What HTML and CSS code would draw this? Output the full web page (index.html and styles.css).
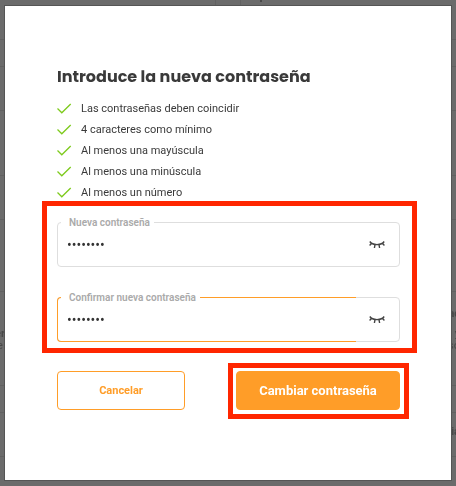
FILE: index.html
```
<!DOCTYPE html>
<html lang="es">
<head>
    <meta charset="utf-8">
    <meta name="viewport" content="width=device-width, initial-scale=1">
    <title>Nueva contraseña</title>
    <link rel="stylesheet" href="styles.css">
</head>
<body>
    <svg width="0" height="0" class="defs">
        <symbol id="check" viewBox="0 0 15 11">
            <path d="M0.5 5.5 L4.8 9.8 L13.7 1" fill="none" stroke="#7dca1c" stroke-width="1.3"/>
        </symbol>
        <symbol id="eye" viewBox="0 0 16 10">
            <path d="M0.8 1.5 C3.5 5.6 12.5 5.6 15.2 1.5 M2.6 3.3 L0.6 5.4 M6 4.6 L5.4 8 M10 4.6 L10.6 8 M13.4 3.3 L15.4 5.4" fill="none" stroke="#444" stroke-width="1.4"/>
        </symbol>
    </svg>

    <div class="backdrop" aria-hidden="true">
        <div class="strip strip-head"><div class="tab"></div><div class="dot"></div></div>
        <div class="strip strip-small"></div>
        <div class="strip strip-label"></div>
        <div class="strip strip-tall"></div>
        <div class="strip strip-label"></div>
        <div class="strip strip-mid"></div>
        <div class="strip strip-text">
            <p class="line"><span></span><b>ac</b></p>
            <p class="line"><b>er</b><span>r y</span></p>
            <p class="line tight"><span>e</span><span>so</span></p>
        </div>
        <div class="strip strip-small"></div>
        <div class="strip strip-label strip-end"><p class="line"><span></span><b>ia</b></p></div>
    </div>

    <form class="modal">
        <h1>Introduce la nueva contraseña</h1>
        <ul class="rules">
            <li><svg class="check"><use href="#check"/></svg>Las contraseñas deben coincidir</li>
            <li><svg class="check"><use href="#check"/></svg>4 caracteres como mínimo</li>
            <li><svg class="check"><use href="#check"/></svg>Al menos una mayúscula</li>
            <li><svg class="check"><use href="#check"/></svg>Al menos una minúscula</li>
            <li><svg class="check"><use href="#check"/></svg>Al menos un número</li>
        </ul>

        <div class="fields mark">
            <div class="field">
                <input type="password" id="pass" value="abcdefgh">
                <label for="pass">Nueva contraseña</label>
                <button type="button" class="eye" aria-label="Mostrar contraseña"><svg><use href="#eye"/></svg></button>
            </div>
            <div class="field active">
                <input type="password" id="pass2" value="abcdefgh">
                <label for="pass2">Confirmar nueva contraseña</label>
                <button type="button" class="eye" aria-label="Mostrar contraseña"><svg><use href="#eye"/></svg></button>
            </div>
        </div>

        <div class="actions">
            <button type="button" class="btn cancel">Cancelar</button>
            <div class="mark submit-mark">
                <button type="submit" class="btn submit">Cambiar contraseña</button>
            </div>
        </div>
    </form>
</body>
</html>
```

FILE: styles.css
```
* {
    box-sizing: border-box;
}

body {
    display: flex;
    min-height: 100vh;
    margin: 0;
    padding: 6px 5px;
    background: #6b6b6b;
    color: #3a3a3a;
    font-family: Roboto, "Liberation Sans", sans-serif;
    font-size: 11px;
}

.defs {
    position: absolute;
}

/* page behind the dialog */
.backdrop {
    position: fixed;
    inset: 0;
    overflow: hidden;
    color: #484848;
}

.strip {
    border-bottom: 1px solid #616161;
}

.strip-head { display: flex; height: 40px; padding-left: 215px; }
.strip-tall { height: 65px; }
.strip-mid { height: 72px; }
.strip-text { height: 94px; padding-top: 15px; }
.strip-small { height: 27px; }
.strip-label { height: 44px; }
.strip-end { padding-top: 12px; }

.tab {
    width: 26px;
    border: solid #616161;
    border-width: 0 1px;
}

.dot {
    width: 2px;
    height: 2px;
    margin-left: 19px;
    background: #484848;
}

.line {
    display: flex;
    justify-content: space-between;
    margin: 0 -4px 6px -5px;
    line-height: 14px;
}

.line.tight {
    margin: -8px -4px 0 -3px;
}

.modal {
    position: relative;
    flex: 1;
    padding: 61px 51px 61px 52px;
    background: #fff;
    box-shadow: 0 0 0 1px #555;
}

h1 {
    margin: 0;
    font-family: Poppins, Inter, sans-serif;
    font-size: 16px;
    font-weight: 700;
    line-height: 20px;
}

.rules {
    margin: 11px 0 0;
    padding: 0;
    list-style: none;
}

.rules li {
    display: flex;
    align-items: center;
    gap: 9px;
    line-height: 21px;
}

.check {
    width: 15px;
    height: 11px;
}

/* red callout frame */
.mark {
    border: 5px solid #ff2600;
}

.fields {
    display: flex;
    flex-direction: column;
    gap: 30px;
    margin: -2px -17px 0 -15px;
    padding: 16px 12px 6px 10px;
}

.field {
    position: relative;
    display: flex;
    height: 45px;
    border: 1px solid #dedede;
    border-radius: 4px;
}

.field input {
    flex: 1;
    min-width: 0;
    margin: -1px 0 -1px -1px;
    padding: 0 0 0 9px;
    border: 1px solid transparent;
    border-right: 0;
    border-radius: 4px 0 0 4px;
    background: none;
    color: #333;
    font-family: Roboto, sans-serif;
    font-size: 14px;
    outline: none;
}

.field.active input {
    border-color: #ff9d28;
}

.field label {
    position: absolute;
    top: -7px;
    left: 3px;
    padding: 0 4px 0 8px;
    background: #fff;
    color: #aaa;
    font-size: 10px;
    font-weight: 600;
    line-height: 14px;
}

.eye {
    width: 43px;
    padding: 0 0 0 13px;
    border: 0;
    background: none;
    text-align: left;
}

.eye svg {
    display: block;
    width: 16px;
    height: 10px;
}

.actions {
    display: flex;
    justify-content: space-between;
    align-items: flex-start;
    margin: 10px -9px 0 0;
}

.btn {
    display: block;
    height: 39px;
    padding: 0;
    border: 1px solid #ff9d28;
    border-radius: 4px;
    font-family: Roboto, sans-serif;
    font-weight: 700;
}

.cancel {
    width: 128px;
    margin-top: 8px;
    background: #fff;
    color: #ff9d28;
    font-size: 11px;
}

.submit-mark {
    padding: 3px 4px 4px 3px;
}

.submit {
    width: 164px;
    background: #ff9d28;
    color: #fff;
    font-size: 13px;
}
```
